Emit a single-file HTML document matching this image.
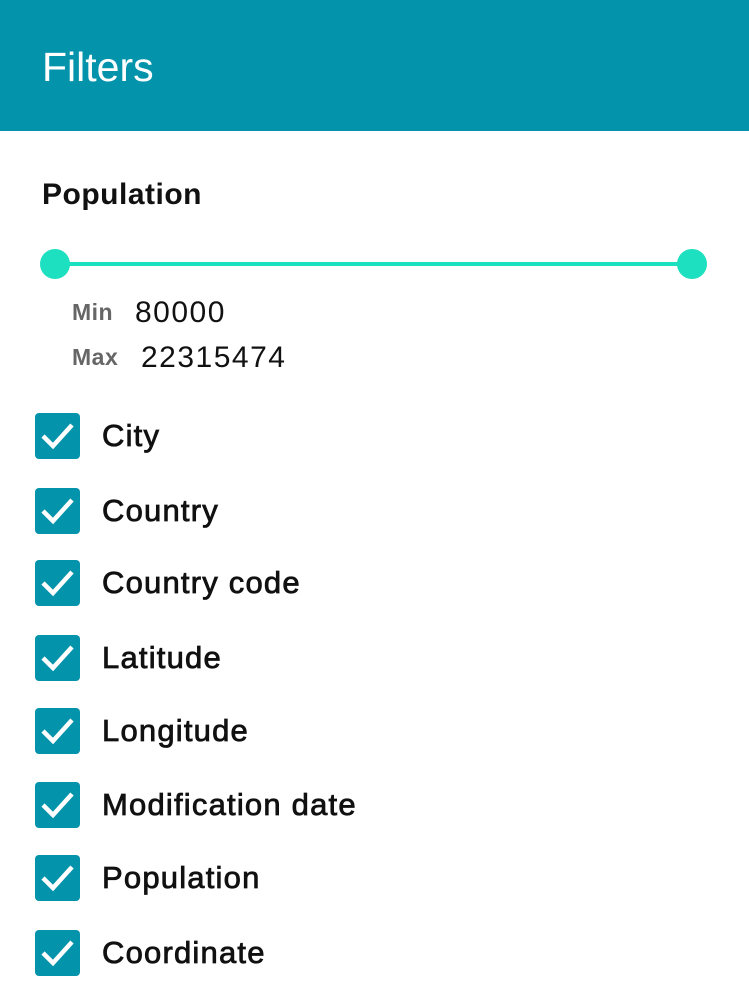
<!DOCTYPE html>
<html><head><meta charset="utf-8"><style>
*{margin:0;padding:0;box-sizing:border-box}
body{width:749px;height:1008px;background:#fff;font-family:"Liberation Sans",sans-serif;position:relative;overflow:hidden}
.hdr{position:absolute;left:0;top:0;width:749px;height:131px;background:#0393AB}
.hdr span{position:absolute;left:42px;top:44px;font-size:41px;color:#fff;line-height:46px}
.pop{position:absolute;left:42px;top:178px;font-size:30px;font-weight:bold;color:#111;line-height:34px;letter-spacing:0.5px}
.line{position:absolute;left:55px;top:262px;width:637px;height:4px;background:#1DE0C0}
.knob{position:absolute;top:249px;width:30px;height:30px;border-radius:50%;background:#1DE0C0}
.lbl{position:absolute;left:72px;font-size:23px;font-weight:bold;color:#666;line-height:26px;letter-spacing:0.5px}
.val{position:absolute;font-size:30px;color:#111;line-height:34px;letter-spacing:1.5px}
.row{position:absolute;left:35px;height:46px}
.cb{position:absolute;left:0;top:0;width:45px;height:46px;border-radius:4px;background:#0393AB}
.row span{position:absolute;left:102px;top:5px;font-size:31px;color:#111;line-height:36px;white-space:nowrap;letter-spacing:1.2px;-webkit-text-stroke:0.8px #111}
.row span{left:67px}
</style></head><body>
<div class="hdr"><span>Filters</span></div>
<div class="pop">Population</div>
<div class="line"></div>
<div class="knob" style="left:40px"></div>
<div class="knob" style="left:677px"></div>
<div class="lbl" style="top:299px">Min</div>
<div class="val" style="left:135px;top:296px">80000</div>
<div class="lbl" style="top:344px">Max</div>
<div class="val" style="left:141px;top:341px">22315474</div>

<div class="row" style="top:413px"><div class="cb"><svg width="45" height="46"><path d="M8 23 L18 33 L37 12" fill="none" stroke="#fff" stroke-width="4.5"/></svg></div><span>City</span></div>
<div class="row" style="top:488px"><div class="cb"><svg width="45" height="46"><path d="M8 23 L18 33 L37 12" fill="none" stroke="#fff" stroke-width="4.5"/></svg></div><span>Country</span></div>
<div class="row" style="top:560px"><div class="cb"><svg width="45" height="46"><path d="M8 23 L18 33 L37 12" fill="none" stroke="#fff" stroke-width="4.5"/></svg></div><span>Country code</span></div>
<div class="row" style="top:635px"><div class="cb"><svg width="45" height="46"><path d="M8 23 L18 33 L37 12" fill="none" stroke="#fff" stroke-width="4.5"/></svg></div><span>Latitude</span></div>
<div class="row" style="top:708px"><div class="cb"><svg width="45" height="46"><path d="M8 23 L18 33 L37 12" fill="none" stroke="#fff" stroke-width="4.5"/></svg></div><span>Longitude</span></div>
<div class="row" style="top:782px"><div class="cb"><svg width="45" height="46"><path d="M8 23 L18 33 L37 12" fill="none" stroke="#fff" stroke-width="4.5"/></svg></div><span>Modification date</span></div>
<div class="row" style="top:855px"><div class="cb"><svg width="45" height="46"><path d="M8 23 L18 33 L37 12" fill="none" stroke="#fff" stroke-width="4.5"/></svg></div><span>Population</span></div>
<div class="row" style="top:930px"><div class="cb"><svg width="45" height="46"><path d="M8 23 L18 33 L37 12" fill="none" stroke="#fff" stroke-width="4.5"/></svg></div><span>Coordinate</span></div>
</body></html>
